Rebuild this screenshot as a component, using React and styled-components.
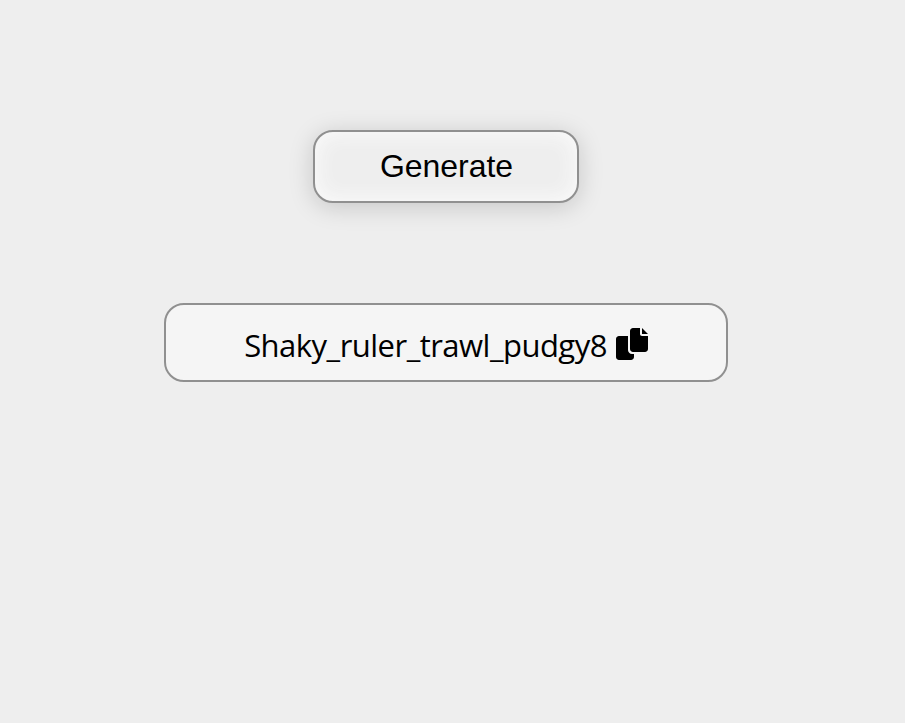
import React from "react";
import styled, { createGlobalStyle } from "styled-components";

const GlobalStyle = createGlobalStyle`
  * { box-sizing: border-box; }
  body { margin: 0; background: #eeeeee; }
`;

const Page = styled.main`
  width: 892px;
  min-height: 723px;
  padding-top: 130px;
  display: flex;
  flex-direction: column;
  align-items: center;
  gap: 100px;
`;

const GenerateButton = styled.button`
  width: 266px;
  height: 73px;
  padding: 0 0 0 1px;
  border: 2px solid #909090;
  border-radius: 20px;
  background: #eeeeee;
  color: #000;
  font: 32px/37px "Liberation Sans", Arial, sans-serif;
  letter-spacing: -0.05px;
  box-shadow: 0 4px 25px rgba(0, 0, 0, 0.17), inset 0 0 20px 2px #fbfbfb;
`;

const Result = styled.div`
  width: 564px;
  height: 79px;
  padding-top: 3px;
  border: 2px solid #909090;
  border-radius: 20px;
  background: #f5f5f5;
  display: flex;
  align-items: center;
  justify-content: center;
  gap: 9px;
`;

const Password = styled.span`
  padding-top: 2px;
  font: 400 31px/43px "Open Sans", "Noto Sans", sans-serif;
  letter-spacing: -0.52px;
  color: #000;
  white-space: nowrap;
`;

const CopyIcon = styled.svg`
  width: 32px;
  height: 32px;
  display: block;
`;

export default function App() {
  return (
    <>
      <GlobalStyle />
      <Page>
        <GenerateButton>Generate</GenerateButton>
        <Result>
          <Password>Shaky_ruler_trawl_pudgy8</Password>
          <CopyIcon viewBox="0 0 512 512" aria-label="Copy">
            <path d="M384 96V0H272c-26.510 0-48 21.490-48 48v288c0 26.510 21.490 48 48 48h192c26.510 0 48-21.490 48-48V128h-95.100C398.400 128 384 113.600 384 96zM416 0v96h96zM192 352V128H48c-26.510 0-48 21.490-48 48v288c0 26.510 21.490 48 48 48h192c26.510 0 48-21.490 48-48v-48h-32c-35.300 0-64-28.700-64-64z" />
          </CopyIcon>
        </Result>
      </Page>
    </>
  );
}
